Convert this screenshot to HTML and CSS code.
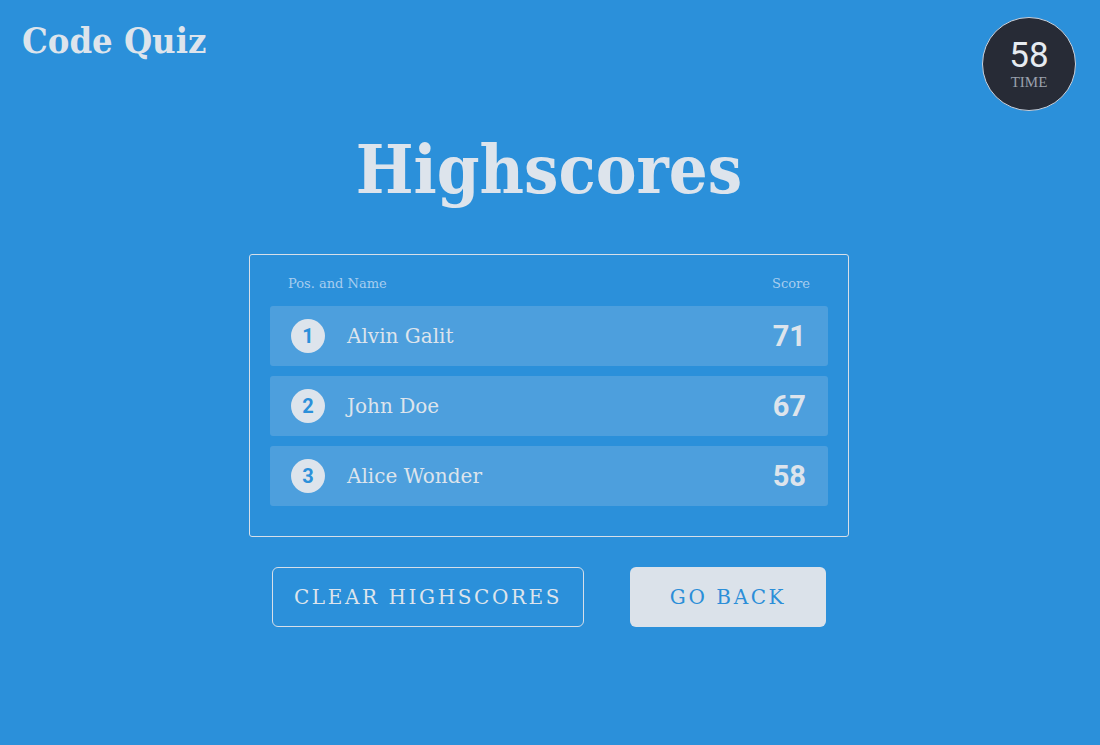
FILE: index.html
```html
<!DOCTYPE html>
<html>
<head>
<meta charset="utf-8">
<link rel="stylesheet" href="styles.css">
</head>
<body>
<header class="topbar">
  <div class="brand">Code Quiz</div>
  <div class="timer">
    <div class="timer-num">58</div>
    <div class="timer-label">TIME</div>
  </div>
</header>
<main class="main">
  <h1 class="title">Highscores</h1>
  <section class="board">
    <div class="board-head">
      <span>Pos. and Name</span>
      <span>Score</span>
    </div>
    <div class="row">
      <span class="rank">1</span>
      <span class="name">Alvin Galit</span>
      <span class="score">71</span>
    </div>
    <div class="row">
      <span class="rank">2</span>
      <span class="name">John Doe</span>
      <span class="score">67</span>
    </div>
    <div class="row">
      <span class="rank">3</span>
      <span class="name">Alice Wonder</span>
      <span class="score">58</span>
    </div>
  </section>
  <div class="actions">
    <button class="btn btn-outline">CLEAR HIGHSCORES</button>
    <button class="btn btn-solid">GO BACK</button>
  </div>
</main>
</body>
</html>
```
FILE: styles.css
```css
html, body {
  margin: 0;
  padding: 0;
}
body {
  width: 1100px;
  height: 745px;
  background: #2b90da;
  color: #dde4ec;
  font-family: "DejaVu Serif", serif;
  overflow: hidden;
}
.topbar {
  display: flex;
  justify-content: space-between;
  align-items: flex-start;
  padding: 17px 24px 0 22px;
  height: 94px;
}
.brand {
  font-weight: bold;
  font-size: 36px;
  font-stretch: condensed;
  line-height: 46px;
}
.timer {
  width: 92px;
  height: 92px;
  border-radius: 50%;
  background: #272b36;
  border: 1px solid #c9d2de;
  display: flex;
  flex-direction: column;
  align-items: center;
  justify-content: center;
}
.timer-num {
  font-family: Roboto, sans-serif;
  font-size: 35px;
  line-height: 32px;
  color: #e6ebf1;
  margin-top: 2px;
}
.timer-label {
  font-family: "Liberation Serif", serif;
  font-size: 15px;
  color: #9aa1ad;
  line-height: 16px;
  margin-top: 2px;
}
.main {
  display: flex;
  flex-direction: column;
  align-items: center;
  padding-right: 2px;
}
.title {
  margin: 13px 0 0;
  font-size: 68px;
  font-stretch: condensed;
  line-height: 90px;
  font-weight: bold;
}
.board {
  margin-top: 40px;
  width: 558px;
  border: 1px solid #d6dfe9;
  border-radius: 3px;
  padding: 0 20px 30px;
  display: flex;
  flex-direction: column;
  gap: 10px;
}
.board-head {
  display: flex;
  justify-content: space-between;
  padding: 20px 18px 4px;
  font-size: 13px;
  line-height: 17px;
  color: #a7cdef;
}
.row {
  height: 60px;
  background: #4d9fdd;
  border-radius: 3px;
  display: flex;
  align-items: center;
  padding: 0 22px 0 21px;
}
.rank {
  width: 34px;
  height: 34px;
  border-radius: 50%;
  background: #dde4ec;
  color: #2b90da;
  font-family: Roboto, sans-serif;
  font-weight: bold;
  font-size: 20px;
  display: flex;
  align-items: center;
  justify-content: center;
}
.name {
  margin-left: 22px;
  font-size: 20px;
  flex: 1;
}
.score {
  font-family: Roboto, sans-serif;
  font-weight: bold;
  font-size: 29px;
}
.actions {
  margin-top: 30px;
  display: flex;
  gap: 46px;
}
.btn {
  height: 60px;
  border-radius: 6px;
  font-family: "DejaVu Serif", serif;
  font-size: 20px;
  letter-spacing: 2.6px;
  padding: 0;
  cursor: pointer;
}
.btn-outline {
  width: 312px;
  background: transparent;
  border: 1px solid #d6dfe9;
  color: #dde4ec;
}
.btn-solid {
  width: 196px;
  background: #dbe2ea;
  border: none;
  color: #2b8ed8;
}
```
